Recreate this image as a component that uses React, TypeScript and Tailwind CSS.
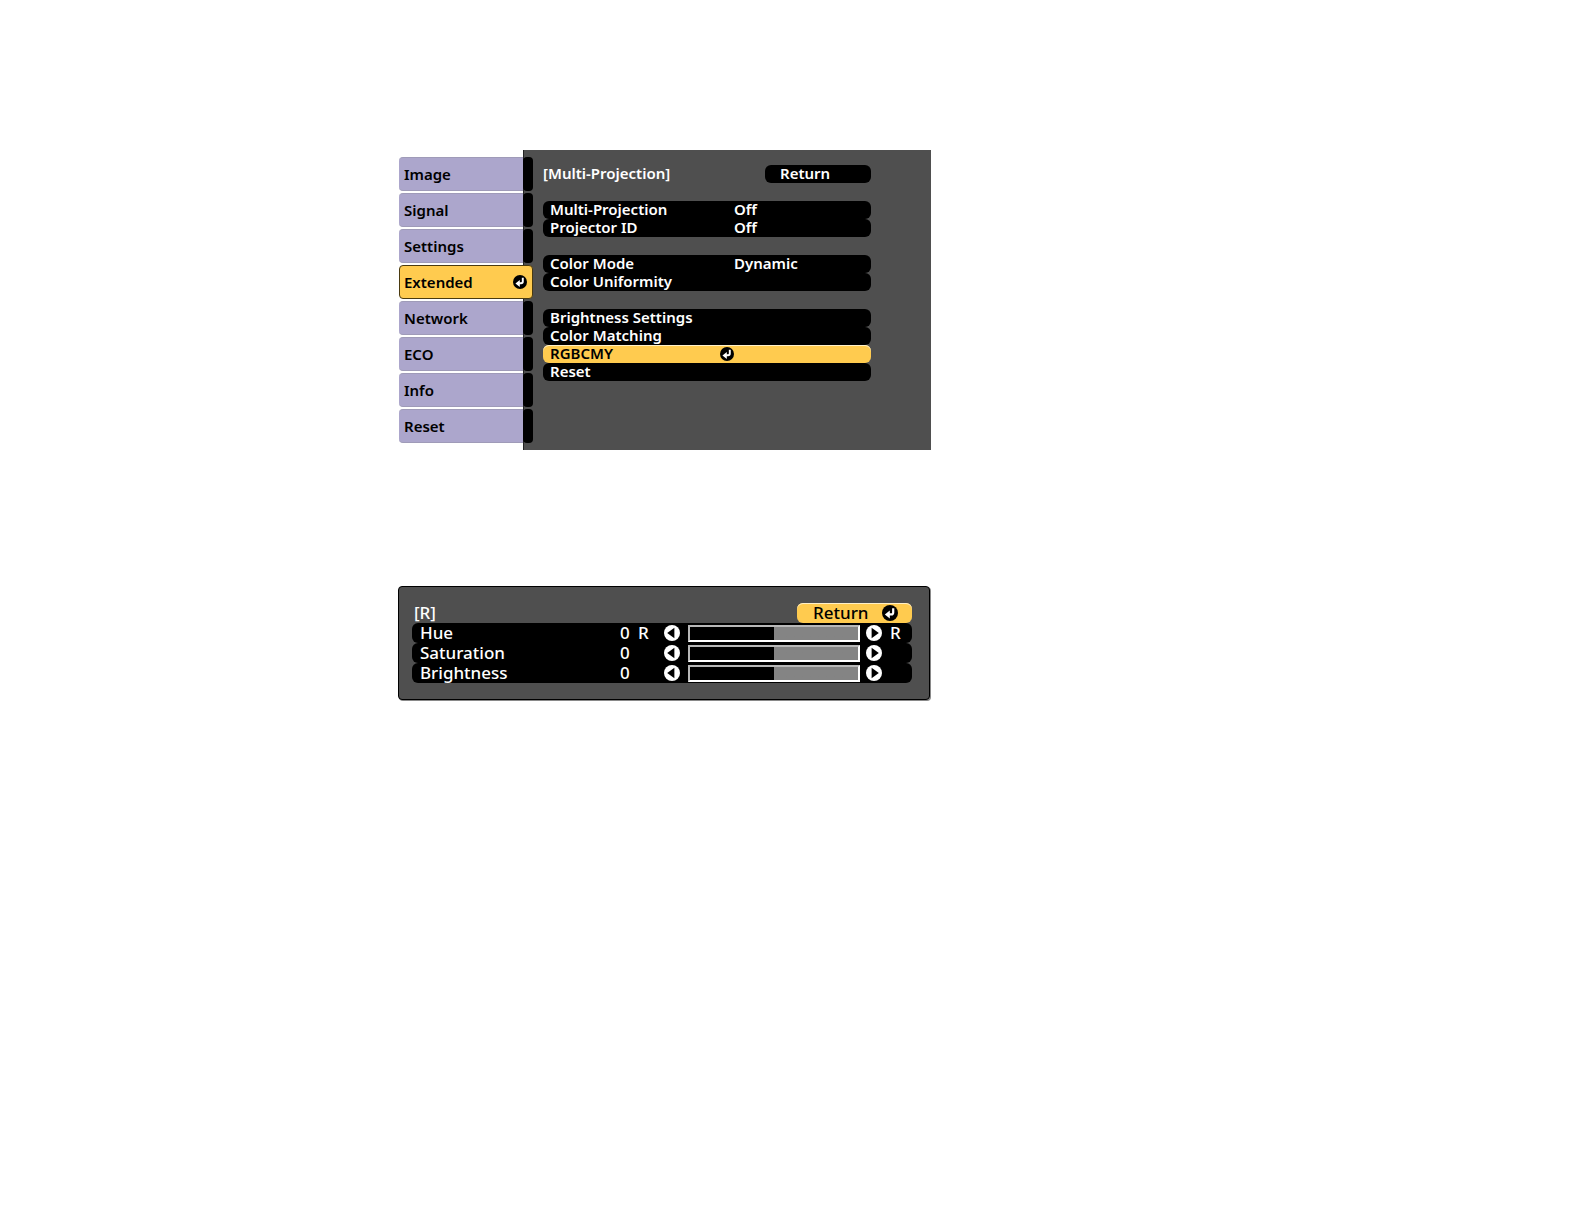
import React from "react";

const tabs = ["Image", "Signal", "Settings", "Extended", "Network", "ECO", "Info", "Reset"];

type Item = { label: string; value?: string; active?: boolean };

const groups: Item[][] = [
  [
    { label: "Multi-Projection", value: "Off" },
    { label: "Projector ID", value: "Off" },
  ],
  [{ label: "Color Mode", value: "Dynamic" }, { label: "Color Uniformity" }],
  [
    { label: "Brightness Settings" },
    { label: "Color Matching" },
    { label: "RGBCMY", active: true },
    { label: "Reset" },
  ],
];

const sliders = [
  { label: "Hue", low: "R", high: "R" },
  { label: "Saturation", low: "", high: "" },
  { label: "Brightness", low: "", high: "" },
];

function EnterIcon({ className }: { className: string }) {
  return (
    <svg viewBox="0 0 16 16" className={className} aria-hidden="true">
      <circle cx="8" cy="8" r="8" fill="#000" />
      <path d="M11.2 3.2V7.4Q11.2 9.4 9.2 9.4H7" fill="none" stroke="#fff" strokeWidth="2.2" />
      <path d="M2.8 9.6L7.8 5.6V13.6Z" fill="#fff" />
    </svg>
  );
}

function ArrowIcon({ left }: { left?: boolean }) {
  return (
    <svg viewBox="0 0 16 16" className="size-4" aria-hidden="true">
      <circle cx="8" cy="8" r="8" fill="#fff" />
      <path d={left ? "M3.2 8L10.4 2.8V13.2Z" : "M12.8 8L5.6 2.8V13.2Z"} fill="#000" />
    </svg>
  );
}

function Tab({ label }: { label: string }) {
  if (label === "Extended") {
    return (
      <button className="flex h-[34px] items-center justify-between rounded-[4px] border border-[#4a3a10] bg-[#ffcb4f] pr-[5px] pl-1 text-left">
        <span className="pb-px">{label}</span>
        <EnterIcon className="size-[14px]" />
      </button>
    );
  }
  return (
    <button className="flex h-[34px] text-left">
      <span className="flex h-full flex-1 items-center rounded-l-[4px] border-y border-[#9f9bb8] bg-[#aca6cc] pb-px pl-[5px]">
        {label}
      </span>
      <span className="h-full w-[10px] rounded-[4px] bg-black" />
    </button>
  );
}

function Row({ item }: { item: Item }) {
  return (
    <button
      className={
        item.active
          ? "flex h-[18px] w-full items-center rounded-[6px] bg-[#ffcb4f] px-[7px] text-left text-black shadow-[inset_0_1px_0_#fff0c8]"
          : "flex h-[18px] w-full items-center rounded-[6px] bg-black px-[7px] text-left text-white"
      }
    >
      <span className={item.active ? "w-[170px] pb-[2px]" : "w-[184px] pb-[2px]"}>{item.label}</span>
      {item.active ? <EnterIcon className="size-[14px]" /> : <span className="pb-[2px]">{item.value}</span>}
    </button>
  );
}

export default function App() {
  return (
    <main className="min-h-screen bg-white pt-[150px] pl-[398px] font-['Noto_Sans',sans-serif] text-[15px] leading-[18px] font-semibold text-black">
      <section className="flex max-w-[533px]">
        <nav aria-label="Menu" className="z-10 -mr-[10px] ml-px flex w-[134px] shrink-0 flex-col gap-[2px] pt-[7px]">
          {tabs.map((t) => (
            <Tab key={t} label={t} />
          ))}
        </nav>
        <div className="flex-1 border-l border-[#222] bg-[#4f4f4f] pt-[15px] pr-[60px] pb-[69px] pl-[19px]">
          <header className="mb-[18px] flex h-[18px] items-center justify-between text-white">
            <h1 className="pb-[2px]">[Multi-Projection]</h1>
            <button className="h-[18px] w-[106px] rounded-[6px] bg-black pb-[2px] pl-[15px] text-left leading-4">
              Return
            </button>
          </header>
          <div className="flex flex-col gap-[18px]">
            {groups.map((g, i) => (
              <div key={i}>
                {g.map((item) => (
                  <Row key={item.label} item={item} />
                ))}
              </div>
            ))}
          </div>
        </div>
      </section>

      <section className="mt-[136px] max-w-[532px] rounded-[4px] border border-black bg-[#4f4f4f] pt-4 pr-[17px] pb-4 pl-[13px] text-[17px] leading-5 font-medium text-white shadow-[1px_1px_0_#8a8a8a]">
        <header className="flex items-center justify-between">
          <h2 className="pl-[2px]">[R]</h2>
          <button className="flex h-5 w-[115px] items-center justify-between rounded-[6px] bg-[#ffcb4f] pr-[14px] pl-4 text-black shadow-[inset_0_1px_0_#fff0c8]">
            Return
            <EnterIcon className="size-4" />
          </button>
        </header>
        {sliders.map((s) => (
          <div key={s.label} className="flex h-5 items-center rounded-[6px] bg-black pl-2">
            <label htmlFor={s.label} className="w-[200px]">
              {s.label}
            </label>
            <output htmlFor={s.label} className="w-[18px]">
              0
            </output>
            <span className="w-[26px]">{s.low}</span>
            <button aria-label={"Decrease " + s.label}>
              <ArrowIcon left />
            </button>
            <input
              id={s.label}
              type="range"
              min={-16}
              max={16}
              defaultValue={0}
              className="mr-[6px] ml-[8px] h-[17px] w-[172px] appearance-none border-2 border-[#b8b8b8] border-r-white border-b-white bg-linear-to-r from-black from-50% to-[#848484] to-50% [&::-webkit-slider-thumb]:appearance-none [&::-webkit-slider-thumb]:opacity-0"
            />
            <button aria-label={"Increase " + s.label}>
              <ArrowIcon />
            </button>
            <span className="ml-[8px]">{s.high}</span>
          </div>
        ))}
      </section>
    </main>
  );
}
